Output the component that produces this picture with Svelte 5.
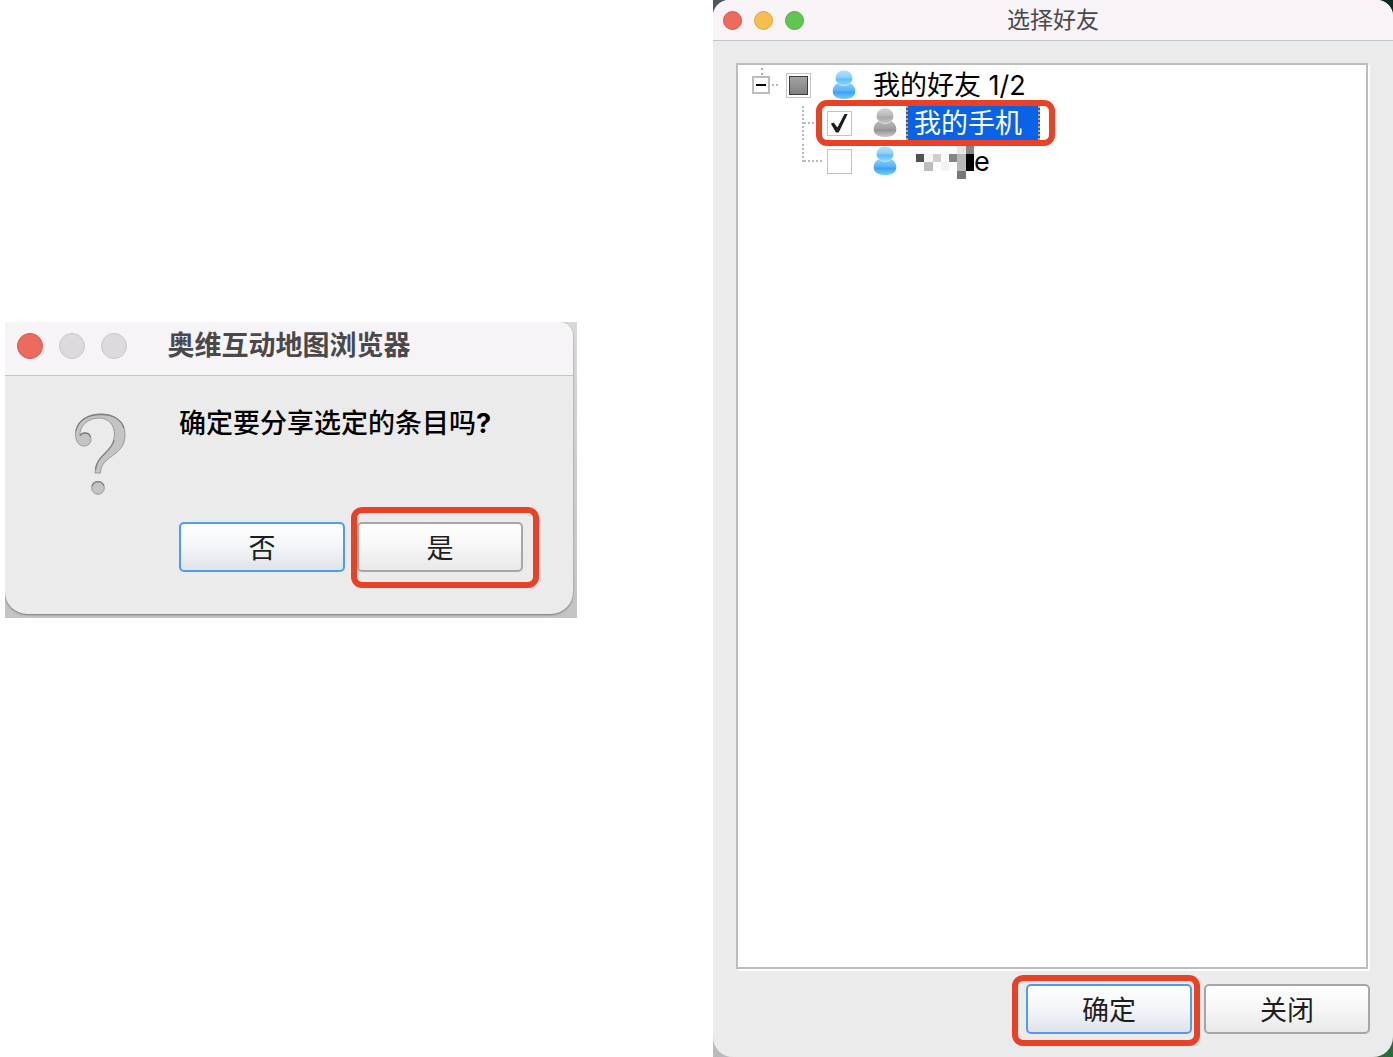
<script>
    /**
     * Share flow: the confirm dialog on the left, the friend picker on
     * the right. Controls the user should click get a red frame.
     */

    let expanded = $state(true);
    let selected = $state('phone');
    let friends = $state([
        { id: 'phone', name: '我的手机', online: false, checked: true },
        { id: 'masked', name: 'e', online: true, checked: false, masked: true },
    ]);

    let checkedCount = $derived(friends.filter((f) => f.checked).length);
    let allChecked = $derived(checkedCount === friends.length);
    let someChecked = $derived(checkedCount > 0 && !allChecked);

    // Mosaic over the hidden part of a name: [column, row, colour]
    const MOSAIC = [
        [5, 0, '#e6e6e6'],
        [6, 0, '#858585'],
        [0, 1, '#525252'],
        [1, 1, '#f6f6f6'],
        [2, 1, '#cecece'],
        [4, 1, '#858585'],
        [5, 1, '#b8b8b8'],
        [6, 1, '#000000'],
        [1, 2, '#bdbdbd'],
        [3, 2, '#f3f3f3'],
        [5, 2, '#b8b8b8'],
        [6, 2, '#000000'],
        [5, 3, '#777777'],
    ];

    function toggleAll(e) {
        for (const f of friends) f.checked = e.currentTarget.checked;
    }
</script>

{#snippet person(online)}
    <svg
        class="person"
        viewBox="0 0 24 30"
        width="24"
        height="30"
        aria-hidden="true"
    >
        <defs>
            <linearGradient id="head-{online}" x2="0" y2="1">
                <stop offset="0" stop-color={online ? '#b5e4fb' : '#d2d2d2'} />
                <stop offset="0.5" stop-color={online ? '#86cefb' : '#b8b8b8'} />
                <stop offset="0.55" stop-color={online ? '#62bcfa' : '#a8a8a8'} />
                <stop offset="1" stop-color={online ? '#8ad6fd' : '#c4c4c4'} />
            </linearGradient>
            <linearGradient id="torso-{online}" x2="0" y2="1">
                <stop offset="0" stop-color={online ? '#8fd0fc' : '#bcbcbc'} />
                <stop offset="0.5" stop-color={online ? '#58b1fa' : '#a0a0a0'} />
                <stop offset="0.58" stop-color={online ? '#3b9ff9' : '#929292'} />
                <stop offset="1" stop-color={online ? '#72d0ff' : '#cccccc'} />
            </linearGradient>
        </defs>
        <path
            d="M7 12.500C3 14 .7 17.500 .7 21.500 .7 26.500 5.500 29 12 29S23.300 26.500 23.300 21.500C23.300 17.500 21 14 17 12.500Z"
            fill="url(#torso-{online})"
        />
        <ellipse cx="12" cy="8" rx="8.500" ry="7.700" fill="url(#head-{online})" />
        <path d="M5.500 13Q12 18 18.500 13" fill="none" stroke="#fff" stroke-opacity=".5" />
    </svg>
{/snippet}

<main>
    <div class="backdrop">
        <section class="dialog" role="alertdialog" aria-labelledby="confirm-title">
            <header class="titlebar">
                <div class="lights">
                    <button type="button" class="light red" aria-label="Close"></button>
                    <button type="button" class="light" aria-label="Minimize" disabled></button>
                    <button type="button" class="light" aria-label="Zoom" disabled></button>
                </div>
                <h1 id="confirm-title">奥维互动地图浏览器</h1>
            </header>
            <div class="content">
                <svg
                    class="question"
                    viewBox="22 11 56 86"
                    width="56"
                    height="86"
                    aria-hidden="true"
                >
                    <g fill="#c4c4c4" stroke="#999" stroke-width="1">
                        <path
                            d="M45 73H50.500C50.500 55 75 57 75 35C75 21 64 14 51 14C36 14 25.500 23 25.500 34C25.500 41 28.500 46 34 46C38 46 41 43 41 39.500C41 36 38 33 35 33C33 33 31 34 30 36C29 26 38 18 49 18C59 18 64.500 25 64.500 35C64.500 52 45 54 45 73Z"
                        />
                        <circle cx="48" cy="88" r="6.300" />
                    </g>
                    <g fill="none" stroke="#808080" stroke-width="1.300">
                        <path d="M26 31C28 20 38 14.500 51 14.500C62 14.500 71 19 74 28M30 36C31 33.500 33 33 35 33C38 33 40 35 40.500 37M64 40C62 52 46 56 45.500 70" />
                        <path d="M42 86A6.300 6.300 0 0 1 54 86" />
                    </g>
                </svg>
                <div class="message">
                    <p>确定要分享选定的条目吗<b>?</b></p>
                    <div class="buttons">
                        <button type="button" class="push default">否</button>
                        <span class="marked yes">
                            <button type="button" class="push">是</button>
                        </span>
                    </div>
                </div>
            </div>
        </section>
    </div>

    <div class="backdrop dark">
        <section class="window" aria-labelledby="picker-title">
            <header class="titlebar">
                <div class="lights">
                    <button type="button" class="light red" aria-label="Close"></button>
                    <button type="button" class="light yellow" aria-label="Minimize"></button>
                    <button type="button" class="light green" aria-label="Zoom"></button>
                </div>
                <h1 id="picker-title">选择好友</h1>
            </header>
            <div class="body">
                <div class="tree">
                    <div class="row">
                        <button
                            type="button"
                            class="expander"
                            aria-expanded={expanded}
                            aria-label="我的好友"
                            onclick={() => (expanded = !expanded)}
                        >
                            <svg viewBox="0 0 14 14" width="14" height="14" aria-hidden="true">
                                <path
                                    d={expanded ? 'M2 7h10' : 'M2 7h10M7 2v10'}
                                    stroke="#000"
                                    stroke-width="2"
                                />
                            </svg>
                        </button>
                        <svg class="branch" viewBox="0 0 16 38" width="16" height="38" aria-hidden="true">
                            <path d="M2 19h8" />
                        </svg>
                        <input
                            id="group"
                            type="checkbox"
                            checked={allChecked}
                            indeterminate={someChecked}
                            onchange={toggleAll}
                        />
                        {@render person(true)}
                        <label for="group">我的好友 {checkedCount}/{friends.length}</label>
                    </div>

                    {#if expanded}
                        {#each friends as friend, i (friend.id)}
                            <div class="row child" class:marked={friend.id === 'phone'}>
                                <svg class="branch" viewBox="0 0 25 38" width="25" height="38" aria-hidden="true">
                                    <path d="M1 2V{i < friends.length - 1 ? 38 : 20}M2 19h18" />
                                </svg>
                                <input id={friend.id} type="checkbox" bind:checked={friend.checked} />
                                {@render person(friend.online)}
                                <label for={friend.id} class:selected={selected === friend.id}>
                                    {#if friend.masked}
                                        <svg
                                            viewBox="0 0 7 4"
                                            width="58"
                                            height="34"
                                            preserveAspectRatio="none"
                                            shape-rendering="crispEdges"
                                            aria-hidden="true"
                                        >
                                            {#each MOSAIC as [x, y, fill]}
                                                <rect {x} {y} width="1" height="1" {fill} />
                                            {/each}
                                        </svg>
                                    {/if}
                                    {friend.name}
                                </label>
                            </div>
                        {/each}
                    {/if}
                </div>
                <footer class="buttons">
                    <span class="marked ok">
                        <button type="button" class="push default">确定</button>
                    </span>
                    <button type="button" class="push">关闭</button>
                </footer>
            </div>
        </section>
    </div>
</main>

<style>
    :global(body) {
        margin: 0;
        background: #fff;
    }
    main {
        display: flex;
        justify-content: space-between;
        align-items: flex-start;
        box-sizing: border-box;
        min-height: 100vh;
        padding-left: 5px;
        color: #000;
        font-family: Inter, 'Noto Sans CJK SC', sans-serif;
        font-size: 27px;
        line-height: 40px;
    }
    .backdrop {
        box-sizing: border-box;
        width: 41.2%;
        margin-top: 322px;
        padding: 0 4px 4px 0;
        background: linear-gradient(#d8d8d8, #c4c4c4);
    }
    .backdrop.dark {
        display: flex;
        width: 49%;
        min-height: 100vh;
        margin-top: 0;
        padding: 0;
        background:
            linear-gradient(#4c585e, #4c585e) 0 0 / 50% 50% no-repeat,
            linear-gradient(#0d2b20, #0d2b20) 100% 0 / 50% 50% no-repeat,
            linear-gradient(#b9b9bf, #b9b9bf) 0 100% / 50% 50% no-repeat,
            #2c6b3c;
    }
    .dialog,
    .window {
        background: #ebebeb;
    }
    .dialog {
        border-radius: 0 14px 22px 22px;
        box-shadow: 0 1px 2px #777;
        clip-path: inset(0 -4px -4px 0);
    }
    .window {
        flex: 1;
        display: flex;
        flex-direction: column;
        border-radius: 16px 16px 20px 20px;
    }

    .titlebar {
        display: grid;
        grid-template-columns: 1fr auto 1fr;
        align-items: center;
        box-sizing: border-box;
        height: 54px;
        padding: 0 12px 6px;
        border-bottom: 1px solid #c6c4c6;
        border-radius: 0 14px 0 0;
        background: #f6f4f7;
    }
    .window .titlebar {
        height: 41px;
        padding: 0 10px;
        border-radius: 16px 16px 0 0;
        background: #f7f3f7;
    }
    h1 {
        margin: 0;
        color: #4a484a;
        font-size: 27px;
        font-weight: 700;
        line-height: 38px;
    }
    .window h1 {
        font-size: 23px;
        font-weight: 400;
    }
    .lights {
        display: flex;
        gap: 16px;
    }
    .window .lights {
        gap: 12px;
    }
    .light {
        width: 26px;
        height: 26px;
        padding: 0;
        border: 1px solid #c9c7c9;
        border-radius: 50%;
        background: #dcdadc;
    }
    .window .light {
        width: 19px;
        height: 19px;
    }
    .light.red {
        border-color: #dd5148;
        background: #ed6a5e;
    }
    .light.yellow {
        border-color: #dfa53f;
        background: #f5bf4f;
    }
    .light.green {
        border-color: #4fae41;
        background: #61c554;
    }

    .content {
        display: flex;
        gap: 51px;
        padding: 28px 48px 42px 67px;
    }
    .question {
        flex-shrink: 0;
        margin-top: 7px;
    }
    .message {
        display: flex;
        flex-direction: column;
        gap: 78px;
    }
    p {
        margin: 0;
        font-weight: 500;
        white-space: nowrap;
    }
    .buttons {
        display: flex;
        gap: 12px;
    }
    .push {
        box-sizing: border-box;
        width: 166px;
        height: 50px;
        padding: 4px 0 0;
        border: 2px solid #a6a6a6;
        border-radius: 5px;
        background: linear-gradient(#fff, #f6f6f6 50%, #e9e9e9);
        color: #1e1e1e;
        font: inherit;
    }
    .push.default {
        border-color: #4f9cec;
        background: linear-gradient(#fff, #f3f5f8 50%, #dfe3ea);
    }

    /* Red frame drawn over the thing to click. */
    .marked {
        position: relative;
        display: flex;
    }
    .marked::after {
        content: '';
        position: absolute;
        border: 6px solid #ea4025;
        border-radius: 11px;
        pointer-events: none;
    }
    .yes::after {
        inset: -15px -16px -16px -6px;
    }
    .ok::after {
        inset: -9px -8px -12px -14px;
    }
    .row.marked::after {
        inset: -4px auto -4px 64px;
        width: 227px;
    }

    .body {
        flex: 1;
        display: flex;
        flex-direction: column;
        gap: 13px;
        padding: 22px 23px 23px;
    }
    .body .buttons {
        justify-content: flex-end;
    }
    .tree {
        flex: 1;
        margin: 0 2px 2px 0;
        padding: 1px 14px;
        border: 2px solid #bcbcbc;
        background: #fff;
        box-shadow: 2px 2px 0 #fdfdfd;
    }
    .row {
        display: flex;
        align-items: center;
        height: 38px;
    }
    .row.child {
        padding-left: 50px;
    }
    .expander {
        position: relative;
        display: grid;
        place-items: center;
        box-sizing: border-box;
        width: 18px;
        height: 18px;
        padding: 0;
        border: 2px solid #bdbdbd;
        background: #fff;
    }
    .expander::before {
        content: '';
        position: absolute;
        bottom: 17px;
        left: 7px;
        height: 7px;
        border-left: 2px dotted #aaa;
    }
    .branch {
        flex-shrink: 0;
    }
    .branch path {
        fill: none;
        stroke: #bababa;
        stroke-width: 2;
        stroke-dasharray: 2 2;
    }
    input {
        appearance: none;
        display: grid;
        place-items: center;
        flex-shrink: 0;
        box-sizing: border-box;
        width: 25px;
        height: 25px;
        margin: 0 21px 0 0;
        border: 1px solid #c4c4c4;
        background: #fff;
    }
    input:indeterminate::before {
        content: '';
        box-sizing: border-box;
        width: 19px;
        height: 19px;
        border: 1px solid #3c3c3c;
        background: linear-gradient(#a4a4a4, #808080);
    }
    input:checked::before {
        content: '';
        width: 17px;
        height: 19px;
        background: #1c1c1c;
        clip-path: polygon(0 54%, 16% 48%, 38% 74%, 82% 0, 100% 0, 46% 100%, 30% 100%);
    }
    .person {
        flex-shrink: 0;
    }
    label {
        display: flex;
        align-items: center;
        box-sizing: border-box;
        height: 34px;
        margin-left: 9px;
        padding: 2px 8px 0;
        white-space: nowrap;
    }
    label.selected {
        padding: 2px 16px 0 6px;
        border-right: 2px dotted #f0a030;
        border-left: 2px dotted #f0a030;
        background: #0a63e6;
        color: #fff;
    }
    label svg {
        padding-left: 2px;
    }
</style>
